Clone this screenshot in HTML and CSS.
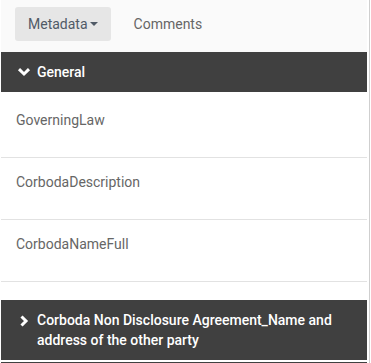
FILE: index.html
```html
<!DOCTYPE html>
<html lang="en">
<head>
    <meta charset="UTF-8">
    <title>Metadata</title>
    <link rel="stylesheet" href="styles.css">
</head>
<body>
    <div class="sidebar">
        <div class="content">
            <div class="tabs">
                <button class="tab active">Metadata<span class="caret"></span></button>
                <button class="tab">Comments</button>
            </div>
            <div class="group open">
                <div class="group-head">
                    <svg class="chev" viewBox="0 0 14 10" width="14" height="10"><path d="M2 2.2 L7 7 L12 2.2" fill="none" stroke="#fff" stroke-width="3"/></svg>
                    <span>General</span>
                </div>
                <div class="group-body">
                    <div class="field">GoverningLaw</div>
                    <div class="field">CorbodaDescription</div>
                    <div class="field">CorbodaNameFull</div>
                </div>
            </div>
            <div class="group">
                <div class="group-head">
                    <svg class="chev" viewBox="0 0 14 12" width="14" height="12"><path d="M4.5 1.5 L9 6 L4.5 10.5" fill="none" stroke="#fff" stroke-width="3"/></svg>
                    <span>Corboda Non Disclosure Agreement_Name and address of the other party</span>
                </div>
            </div>
            <div class="group">
                <div class="group-head">
                    <span>&nbsp;</span>
                </div>
            </div>
        </div>
    </div>
</body>
</html>
```

FILE: styles.css
```css
*{
    margin: 0;
    padding: 0;
    box-sizing: border-box;
    font-family: Roboto, "Liberation Sans", sans-serif;
}
body{
    background: #fff;
    overflow: hidden;
}
.sidebar{
    width: 370px;
    height: 363px;
    border-right: 1px solid #cfcfcf;
    overflow: hidden;
}
.content{
    padding: 0 2px 0 1px;
}
.tabs{
    display: flex;
    align-items: center;
    height: 52px;
    padding: 0 0 4px 14px;
    gap: 10px;
    background: #fafafa;
}
.tab{
    border: none;
    background: none;
    font-size: 14px;
    color: #666;
    height: 34px;
    padding: 0 13px;
    border-radius: 3px;
    display: flex;
    align-items: center;
}
.tab.active{
    background: #e6e6e6;
    color: #505a66;
}
.caret{
    display: inline-block;
    margin-left: 2px;
    border-left: 4px solid transparent;
    border-right: 4px solid transparent;
    border-top: 4px solid #505a66;
}
.group{
    margin-bottom: 2px;
}
.group-head{
    display: flex;
    align-items: flex-start;
    background: #404040;
    color: #fff;
    font-size: 14px;
    font-weight: 500;
    line-height: 20px;
    padding: 10px 16px;
    gap: 6px;
}
.chev{
    flex: none;
    margin-top: 5px;
}
.group-body{
    padding-top: 4px;
    margin-bottom: 18px;
}
.field{
    font-size: 14px;
    line-height: 20px;
    color: #666;
    padding: 14px 15px 27px;
    border-bottom: 1px solid #e2e2e2;
}
```
